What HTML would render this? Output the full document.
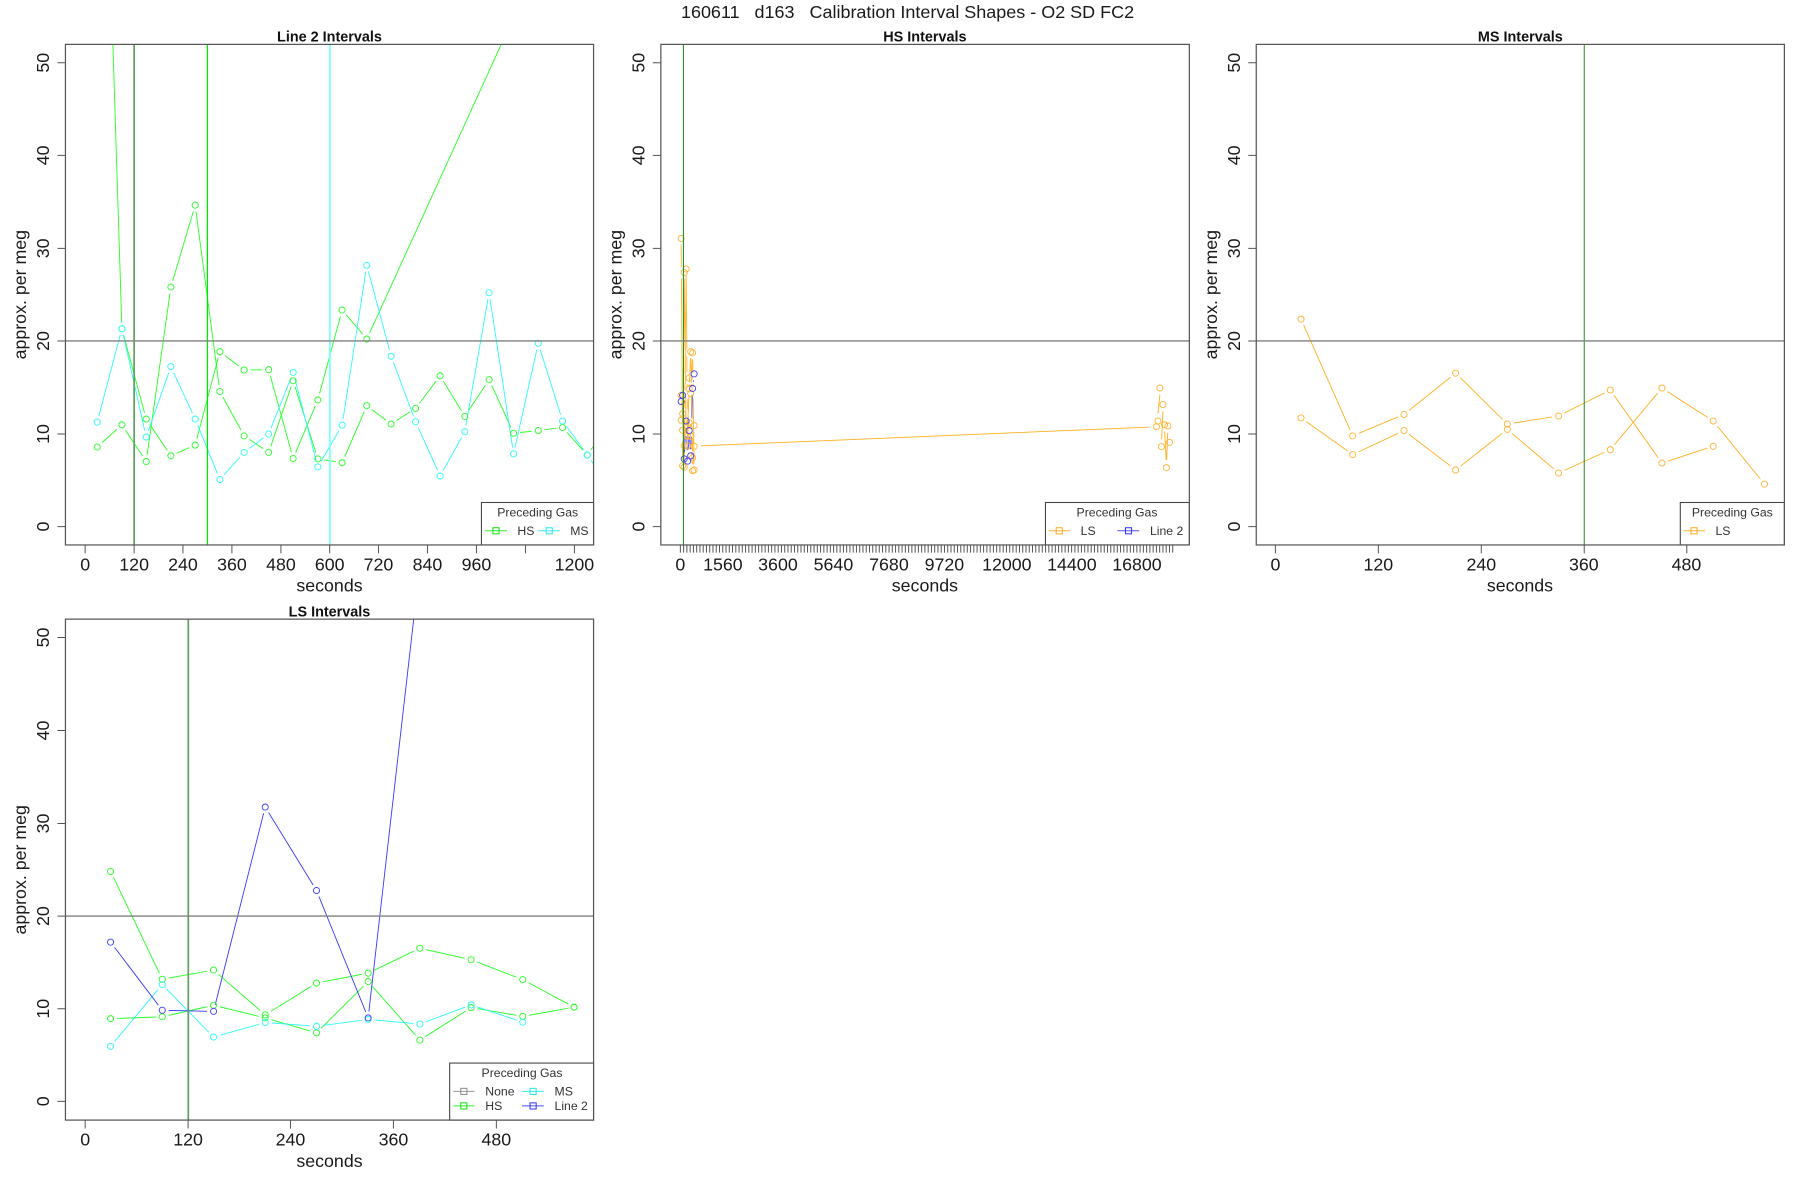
<!DOCTYPE html>
<html><head><meta charset="utf-8"><title>160611 d163 Calibration Interval Shapes</title>
<style>
html,body{margin:0;padding:0;background:#fff;width:1800px;height:1200px;overflow:hidden}
svg{display:block;filter:blur(.3px)}
text{font-family:"Liberation Sans",sans-serif;fill:#1a1a1a;font-size:46.5px}
.t{font-weight:bold;font-size:37.7px;text-anchor:middle;fill:#111}
.m{text-anchor:middle}
.lg{font-size:32px;fill:#333}
.lc{font-size:32px;fill:#333;text-anchor:middle}
.box{fill:none;stroke:#555;stroke-width:3.2}
.tk{stroke:#555;stroke-width:2.6;fill:none}
.h20{stroke:#808080;stroke-width:3.6}
.l{fill:none;stroke-width:2.4}
.hh{fill:none;stroke:none;marker:url(#h)}
.pg{fill:none;stroke:none;marker:url(#rg)}
.pc{fill:none;stroke:none;marker:url(#rc)}
.po{fill:none;stroke:none;marker:url(#ro)}
.pb{fill:none;stroke:none;marker:url(#rb)}
.leg{fill:#fff;stroke:#444;stroke-width:2.8}
.sq{fill:none;stroke-width:2.6}
</style></head><body>
<svg width="1800" height="1200" viewBox="0 0 1800 1200" xmlns="http://www.w3.org/2000/svg">
<rect width="1800" height="1200" fill="#fff"/>
<defs>
<marker id="h" markerUnits="userSpaceOnUse" markerWidth="40" markerHeight="40" refX="20" refY="20" overflow="visible"><circle cx="20" cy="20" r="17" fill="#000"/></marker>
<marker id="rg" markerUnits="userSpaceOnUse" markerWidth="40" markerHeight="40" refX="20" refY="20" overflow="visible"><circle cx="20" cy="20" r="8" fill="none" stroke="#28ff28" stroke-width="2.4"/></marker>
<marker id="rc" markerUnits="userSpaceOnUse" markerWidth="40" markerHeight="40" refX="20" refY="20" overflow="visible"><circle cx="20" cy="20" r="8" fill="none" stroke="#2cfafa" stroke-width="2.4"/></marker>
<marker id="ro" markerUnits="userSpaceOnUse" markerWidth="40" markerHeight="40" refX="20" refY="20" overflow="visible"><circle cx="20" cy="20" r="8" fill="none" stroke="#ffb436" stroke-width="2.4"/></marker>
<marker id="rb" markerUnits="userSpaceOnUse" markerWidth="40" markerHeight="40" refX="20" refY="20" overflow="visible"><circle cx="20" cy="20" r="8" fill="none" stroke="#4040ff" stroke-width="2.4"/></marker>

<polyline id="a" points="254,1168 318.5,1110 382,1206 446.5,750 510,536 574.5,1023 638,1139 702,1182 766,995 830.5,1199 894,1209 958.5,1060 1022,1108 1086,1067 1150,982 1214.5,1088 1278,992 1342,1132 1406.5,1125 1470,1117 1534.5,1189 1598,1100"/>
<polyline id="b" points="254,-1179 318.5,859 382,1095 446.5,1191 510,1163 574.5,919 638,967 702,966 766,1198 830.5,1045 894,810 958.5,886 1400,-82"/>
<polyline id="c" points="254,1103 318.5,859 382,1142 446.5,958 510,1095 574.5,1253 638,1182 702,1134 766,973 830.5,1220 894,1111 958.5,693 1022,931 1086,1102 1150,1244 1214.5,1128 1278,765 1342,1186 1406.5,897 1470,1100 1534.5,1189 1598,1280"/>
<polyline id="k" points="212,623 216,1217 220,712 225,1138 229,1113 233,1016 237,919 242,1196 246,1112"/>
<polyline id="l" points="212,1033 216,1081 220,1221 225,703 229,1165 233,988 237,1028 242,922 246,1228"/>
<polyline id="n" points="212,1098 216,1124 220,1165 225,1115 229,1140 233,1105 237,1140 242,1230 246,1166"/>
<polyline id="q" points="212,1049 216,1033 220,1199 225,1100 229,1205 233,1125 237,1191 242,1015 246,977"/>
<polyline id="d" points="264,834 399,1139 533,1083 668,975 803,1108 937,1087 1072,1019 1207,1210 1341,1166"/>
<polyline id="e" points="264,1092 399,1188 533,1125 668,1228 803,1122 937,1236 1072,1175 1207,1014 1341,1100 1475,1265"/>
<polyline id="f" points="289,709 424,991 558,967 693,1084 827,1001 962,975 1097,910 1231,940 1366,992 1500,1064"/>
<polyline id="r" points="289,1094 424,1089 558,1059 693,1092 827,1131 962,997 1097,1150 1231,1065 1366,1088 1500,1064"/>
<polyline id="i" points="289,1166 424,1005 558,1142 693,1104 827,1114 962,1096 1097,1108 1231,1058 1366,1103"/>
<polyline id="j" points="289,894 424,1072 558,1075 693,541 827,759 962,1092 1097,-90"/>

<mask id="ma" maskUnits="userSpaceOnUse" x="0" y="-2000" width="1700" height="4000"><rect x="0" y="-2000" width="1700" height="4000" fill="#fff"/><use href="#a" class="hh"/></mask>
<mask id="mb" maskUnits="userSpaceOnUse" x="0" y="-2000" width="1700" height="4000"><rect x="0" y="-2000" width="1700" height="4000" fill="#fff"/><use href="#b" class="hh"/></mask>
<mask id="mc" maskUnits="userSpaceOnUse" x="0" y="-2000" width="1700" height="4000"><rect x="0" y="-2000" width="1700" height="4000" fill="#fff"/><use href="#c" class="hh"/></mask>
<mask id="md" maskUnits="userSpaceOnUse" x="0" y="-2000" width="1700" height="4000"><rect x="0" y="-2000" width="1700" height="4000" fill="#fff"/><use href="#d" class="hh"/></mask>
<mask id="me" maskUnits="userSpaceOnUse" x="0" y="-2000" width="1700" height="4000"><rect x="0" y="-2000" width="1700" height="4000" fill="#fff"/><use href="#e" class="hh"/></mask>
<mask id="mf" maskUnits="userSpaceOnUse" x="0" y="-2000" width="1700" height="4000"><rect x="0" y="-2000" width="1700" height="4000" fill="#fff"/><use href="#f" class="hh"/></mask>
<mask id="mr" maskUnits="userSpaceOnUse" x="0" y="-2000" width="1700" height="4000"><rect x="0" y="-2000" width="1700" height="4000" fill="#fff"/><use href="#r" class="hh"/></mask>
<mask id="mi" maskUnits="userSpaceOnUse" x="0" y="-2000" width="1700" height="4000"><rect x="0" y="-2000" width="1700" height="4000" fill="#fff"/><use href="#i" class="hh"/></mask>
<mask id="mj" maskUnits="userSpaceOnUse" x="0" y="-2000" width="1700" height="4000"><rect x="0" y="-2000" width="1700" height="4000" fill="#fff"/><use href="#j" class="hh"/></mask>
<mask id="mk" maskUnits="userSpaceOnUse" x="0" y="0" width="1700" height="2000"><rect x="0" y="0" width="1700" height="2000" fill="#fff"/><use href="#k" class="hh"/></mask>
<mask id="ml" maskUnits="userSpaceOnUse" x="0" y="0" width="1700" height="2000"><rect x="0" y="0" width="1700" height="2000" fill="#fff"/><use href="#l" class="hh"/></mask>
<mask id="mn" maskUnits="userSpaceOnUse" x="0" y="0" width="1700" height="2000"><rect x="0" y="0" width="1700" height="2000" fill="#fff"/><use href="#n" class="hh"/></mask>
<mask id="mq" maskUnits="userSpaceOnUse" x="0" y="0" width="1700" height="2000"><rect x="0" y="0" width="1700" height="2000" fill="#fff"/><use href="#q" class="hh"/></mask>

<clipPath id="c1"><rect x="171" y="116" width="1380" height="1308"/></clipPath>
<clipPath id="c2"><rect x="159" y="116" width="1381" height="1308"/></clipPath>
<clipPath id="c3"><rect x="147" y="116" width="1380" height="1308"/></clipPath>
<clipPath id="c4"><rect x="171" y="50" width="1380" height="1309"/></clipPath>
</defs>

<g transform="scale(.3827)">
<text x="2371.4" y="47" class="m" xml:space="preserve" style="white-space:pre;font-size:47px">160611   d163   Calibration Interval Shapes - O2 SD FC2</text>
</g>

<!-- PLOT 1 -->
<g transform="scale(.3827)">
<text x="861" y="108" class="t">Line 2 Intervals</text>
<g clip-path="url(#c1)">
<use href="#a" class="l" stroke="#28ff28" mask="url(#ma)"/>
<use href="#b" class="l" stroke="#28ff28" mask="url(#mb)"/>
<use href="#c" class="l" stroke="#30fafa" mask="url(#mc)"/>
<use href="#a" class="pg"/><use href="#b" class="pg"/><use href="#c" class="pc"/>
<line x1="350.5" y1="116" x2="350.5" y2="1424" stroke="#5f9f5f" stroke-width="4.4"/>
<line x1="542" y1="116" x2="542" y2="1424" stroke="#00e600" stroke-width="3.4"/>
<line x1="862" y1="116" x2="862" y2="1424" stroke="#80ffff" stroke-width="4.8"/>
<line x1="171" y1="891" x2="1551" y2="891" class="h20"/>
</g>
<rect x="1258" y="1313" width="293" height="111" class="leg"/>
<text x="1405" y="1349" class="lc">Preceding Gas</text>
<line x1="1267" y1="1387" x2="1325" y2="1387" stroke="#30f030" stroke-width="2.6"/><rect x="1288" y="1379" width="16" height="16" class="sq" stroke="#10e010"/>
<text x="1352" y="1398" class="lg">HS</text>
<line x1="1406" y1="1387" x2="1463" y2="1387" stroke="#30eeee" stroke-width="2.6"/><rect x="1427" y="1379" width="16" height="16" class="sq" stroke="#20e8e8"/>
<text x="1490" y="1398" class="lg">MS</text>
<rect x="171" y="116" width="1380" height="1308" class="box"/>
<path class="tk" d="M150 164H171M150 406H171M150 649H171M150 891H171M150 1134H171M150 1376H171"/>
<path class="tk" d="M222.5 1424v22M350.5 1424v22M478 1424v22M606 1424v22M734 1424v22M861.500 1424v22M989 1424v22M1117 1424v22M1245 1424v22M1373 1424v22M1501 1424v22"/>
<text x="222.5" y="1491" class="m">0</text><text x="350.5" y="1491" class="m">120</text><text x="478" y="1491" class="m">240</text><text x="606" y="1491" class="m">360</text><text x="734" y="1491" class="m">480</text><text x="861.500" y="1491" class="m">600</text><text x="989" y="1491" class="m">720</text><text x="1117" y="1491" class="m">840</text><text x="1245" y="1491" class="m">960</text><text x="1501" y="1491" class="m">1200</text>
<text x="861" y="1546" class="m">seconds</text>
<text transform="translate(128,1376) rotate(-90)" class="m">0</text><text transform="translate(128,1134) rotate(-90)" class="m">10</text><text transform="translate(128,891) rotate(-90)" class="m">20</text><text transform="translate(128,649) rotate(-90)" class="m">30</text><text transform="translate(128,406) rotate(-90)" class="m">40</text><text transform="translate(128,164) rotate(-90)" class="m">50</text>
<text transform="translate(68,770) rotate(-90)" class="m">approx. per meg</text>
</g>

<!-- PLOT 2 -->
<g transform="translate(600,0) scale(.3827)">
<text x="849" y="108" class="t">HS Intervals</text>
<g clip-path="url(#c2)">
<use href="#k" class="l" stroke="#ffb830" mask="url(#mk)"/>
<use href="#l" class="l" stroke="#ffb830" mask="url(#ml)"/>
<use href="#n" class="l" stroke="#ffb830" mask="url(#mn)"/>
<use href="#q" class="l" stroke="#5050ff" mask="url(#mq)"/>
<path class="l" stroke="#ffb020" d="M264 1165L1436 1116M1463 1031L1458 1080M1467.500 1148L1471 1075M1475.500 1128L1479.500 1202M1483.500 1131L1480.500 1202"/>
<use href="#k" class="po"/><use href="#l" class="po"/><use href="#n" class="po"/><use href="#q" class="pb"/>
<polyline class="po" points="1454,1115 1458,1100 1463,1014 1467,1167 1471,1057 1475,1110 1480,1222 1484,1113 1488,1156"/>
<line x1="218" y1="116" x2="218" y2="1424" stroke="#228b22" stroke-width="2.8"/>
<line x1="159" y1="891" x2="1540" y2="891" class="h20"/>
</g>
<rect x="1164" y="1313" width="376" height="111" class="leg"/>
<text x="1351" y="1349" class="lc">Preceding Gas</text>
<line x1="1172" y1="1387" x2="1228" y2="1387" stroke="#ffb030" stroke-width="2.6"/><rect x="1192" y="1379" width="16" height="16" class="sq" stroke="#ffa820"/>
<text x="1256" y="1398" class="lg">LS</text>
<line x1="1352" y1="1387" x2="1409" y2="1387" stroke="#5050ff" stroke-width="2.6"/><rect x="1373" y="1379" width="16" height="16" class="sq" stroke="#3030ff"/>
<text x="1437" y="1398" class="lg">Line 2</text>
<rect x="159" y="116" width="1381" height="1308" class="box"/>
<path class="tk" d="M138 164H159M138 406H159M138 649H159M138 891H159M138 1134H159M138 1376H159"/>
<line x1="208.700" y1="1434" x2="1498" y2="1434" stroke="#555" stroke-width="20" stroke-dasharray="2.6 5.92"/>
<text x="210" y="1491" class="m">0</text><text x="321" y="1491" class="m">1560</text><text x="465" y="1491" class="m">3600</text><text x="610" y="1491" class="m">5640</text><text x="755" y="1491" class="m">7680</text><text x="900" y="1491" class="m">9720</text><text x="1063" y="1491" class="m">12000</text><text x="1233" y="1491" class="m">14400</text><text x="1403" y="1491" class="m">16800</text>
<text x="849" y="1546" class="m">seconds</text>
<text transform="translate(116,1376) rotate(-90)" class="m">0</text><text transform="translate(116,1134) rotate(-90)" class="m">10</text><text transform="translate(116,891) rotate(-90)" class="m">20</text><text transform="translate(116,649) rotate(-90)" class="m">30</text><text transform="translate(116,406) rotate(-90)" class="m">40</text><text transform="translate(116,164) rotate(-90)" class="m">50</text>
<text transform="translate(56,770) rotate(-90)" class="m">approx. per meg</text>
</g>

<!-- PLOT 3 -->
<g transform="translate(1200,0) scale(.3827)">
<text x="837" y="108" class="t">MS Intervals</text>
<g clip-path="url(#c3)">
<use href="#d" class="l" stroke="#ffb020" mask="url(#md)"/>
<use href="#e" class="l" stroke="#ffb020" mask="url(#me)"/>
<use href="#d" class="po"/><use href="#e" class="po"/>
<line x1="1004" y1="116" x2="1004" y2="1424" stroke="#228b22" stroke-width="2.6"/>
<line x1="147" y1="891" x2="1527" y2="891" class="h20"/>
</g>
<rect x="1255" y="1313" width="272" height="111" class="leg"/>
<text x="1391" y="1349" class="lc">Preceding Gas</text>
<line x1="1263" y1="1387" x2="1320" y2="1387" stroke="#ffb030" stroke-width="2.6"/><rect x="1283" y="1379" width="16" height="16" class="sq" stroke="#ffa820"/>
<text x="1347" y="1398" class="lg">LS</text>
<rect x="147" y="116" width="1380" height="1308" class="box"/>
<path class="tk" d="M126 164H147M126 406H147M126 649H147M126 891H147M126 1134H147M126 1376H147"/>
<path class="tk" d="M197 1424v22M466 1424v22M735 1424v22M1004 1424v22M1272 1424v22"/>
<text x="197" y="1491" class="m">0</text><text x="466" y="1491" class="m">120</text><text x="735" y="1491" class="m">240</text><text x="1003" y="1491" class="m">360</text><text x="1271" y="1491" class="m">480</text>
<text x="836" y="1546" class="m">seconds</text>
<text transform="translate(104,1376) rotate(-90)" class="m">0</text><text transform="translate(104,1134) rotate(-90)" class="m">10</text><text transform="translate(104,891) rotate(-90)" class="m">20</text><text transform="translate(104,649) rotate(-90)" class="m">30</text><text transform="translate(104,406) rotate(-90)" class="m">40</text><text transform="translate(104,164) rotate(-90)" class="m">50</text>
<text transform="translate(44,770) rotate(-90)" class="m">approx. per meg</text>
</g>

<!-- PLOT 4 -->
<g transform="translate(0,600) scale(.3827)">
<text x="861" y="43" class="t">LS Intervals</text>
<g clip-path="url(#c4)">
<use href="#f" class="l" stroke="#28ff28" mask="url(#mf)"/>
<use href="#r" class="l" stroke="#28ff28" mask="url(#mr)"/>
<use href="#i" class="l" stroke="#30fafa" mask="url(#mi)"/>
<use href="#j" class="l" stroke="#3c3cff" mask="url(#mj)"/>
<use href="#f" class="pg"/><use href="#r" class="pg"/><use href="#i" class="pc"/><use href="#j" class="pb"/>
<line x1="492" y1="50" x2="492" y2="1359" stroke="#5f9f5f" stroke-width="4.4"/>
<line x1="171" y1="826" x2="1551" y2="826" class="h20"/>
</g>
<rect x="1175" y="1210" width="376" height="149" class="leg"/>
<text x="1364" y="1247" class="lc">Preceding Gas</text>
<line x1="1184" y1="1284" x2="1240" y2="1284" stroke="#999" stroke-width="2.6"/><rect x="1204" y="1276" width="16" height="16" class="sq" stroke="#888"/>
<text x="1268" y="1295" class="lg">None</text>
<line x1="1184" y1="1322" x2="1240" y2="1322" stroke="#30f030" stroke-width="2.6"/><rect x="1204" y="1314" width="16" height="16" class="sq" stroke="#10e010"/>
<text x="1268" y="1333" class="lg">HS</text>
<line x1="1364" y1="1284" x2="1421" y2="1284" stroke="#30eeee" stroke-width="2.6"/><rect x="1385" y="1276" width="16" height="16" class="sq" stroke="#20e8e8"/>
<text x="1449" y="1295" class="lg">MS</text>
<line x1="1364" y1="1322" x2="1421" y2="1322" stroke="#5050ff" stroke-width="2.6"/><rect x="1385" y="1314" width="16" height="16" class="sq" stroke="#3030ff"/>
<text x="1449" y="1333" class="lg">Line 2</text>
<rect x="171" y="50" width="1380" height="1309" class="box"/>
<path class="tk" d="M150 98H171M150 341H171M150 584H171M150 826H171M150 1068H171M150 1310H171"/>
<path class="tk" d="M222.5 1359v22M491.500 1359v22M759 1359v22M1028 1359v22M1297 1359v22"/>
<text x="222.5" y="1426" class="m">0</text><text x="491.500" y="1426" class="m">120</text><text x="759" y="1426" class="m">240</text><text x="1028" y="1426" class="m">360</text><text x="1297" y="1426" class="m">480</text>
<text x="861" y="1481" class="m">seconds</text>
<text transform="translate(128,1310) rotate(-90)" class="m">0</text><text transform="translate(128,1068) rotate(-90)" class="m">10</text><text transform="translate(128,826) rotate(-90)" class="m">20</text><text transform="translate(128,584) rotate(-90)" class="m">30</text><text transform="translate(128,341) rotate(-90)" class="m">40</text><text transform="translate(128,98) rotate(-90)" class="m">50</text>
<text transform="translate(68,705) rotate(-90)" class="m">approx. per meg</text>
</g>
</svg>
</body></html>
